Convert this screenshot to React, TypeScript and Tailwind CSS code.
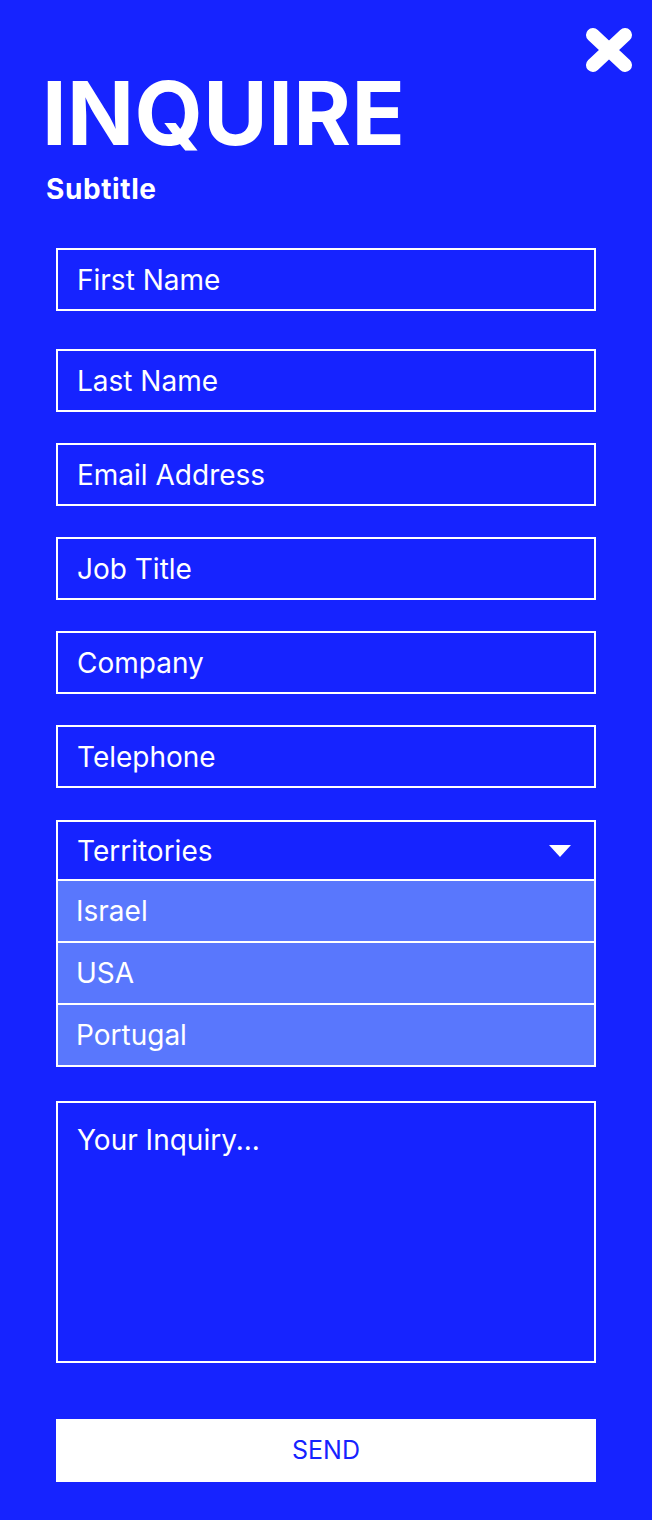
import { useState } from "react";

const fields = ["First Name", "Last Name", "Email Address", "Job Title", "Company", "Telephone"];
const territories = ["Israel", "USA", "Portugal"];

export default function App() {
  const [open, setOpen] = useState(true);

  return (
    <div
      className="relative min-h-screen w-full bg-[#1623ff] text-white pb-[38px]"
      style={{ fontFamily: "Inter, 'Liberation Sans', sans-serif" }}
    >
      {/* Close */}
      <button className="absolute top-[28px] right-[20px] w-[46px] h-[44px]">
        <svg viewBox="0 0 46 44" width="46" height="44">
          <path d="M7 7 L39 37 M39 7 L7 37" stroke="#fff" strokeWidth="14" strokeLinecap="round" />
        </svg>
      </button>

      {/* Header */}
      <div className="pt-[69px]">
        <h1 className="pl-[42px] text-[88px] leading-none font-bold tracking-[0.4px]">INQUIRE</h1>
        <div className="pl-[46px] mt-[18px] text-[28px] leading-none font-bold tracking-[0.6px]">Subtitle</div>
      </div>

      {/* Form */}
      <form className="px-[56px] mt-[45px] flex flex-col">
        {fields.map((f, i) => (
          <input
            key={f}
            placeholder={f}
            className={`h-[63px] w-full border-2 border-white bg-transparent px-[19px] text-[28px] text-white placeholder:text-white outline-none ${
              i === 0 ? "mb-[38px]" : "mb-[31px]"
            }`}
          />
        ))}

        <div className="mt-[1px] border-2 border-white">
          <button
            type="button"
            onClick={() => setOpen(!open)}
            className="w-full h-[57px] flex items-center justify-between pl-[19px] pr-[23px] text-[28px]"
          >
            <span>Territories</span>
            <svg width="22" height="12" viewBox="0 0 22 12">
              <path d="M0 0 H22 L11 12 Z" fill="#fff" />
            </svg>
          </button>
          {open && (
            <div className="flex flex-col">
              {territories.map(t => (
                <div
                  key={t}
                  className="h-[62px] flex items-center border-t-2 border-white bg-[#5977fd] px-[18px] text-[28px]"
                >
                  {t}
                </div>
              ))}
            </div>
          )}
        </div>

        <textarea
          placeholder="Your Inquiry..."
          className="mt-[34px] h-[262px] w-full resize-none border-2 border-white bg-transparent px-[19px] pt-[16px] text-[28px] text-white placeholder:text-white outline-none"
        />

        <button
          type="button"
          className="mt-[56px] h-[63px] w-full bg-white text-[#1623ff] text-[25px] uppercase"
        >
          Send
        </button>
      </form>
    </div>
  );
}
